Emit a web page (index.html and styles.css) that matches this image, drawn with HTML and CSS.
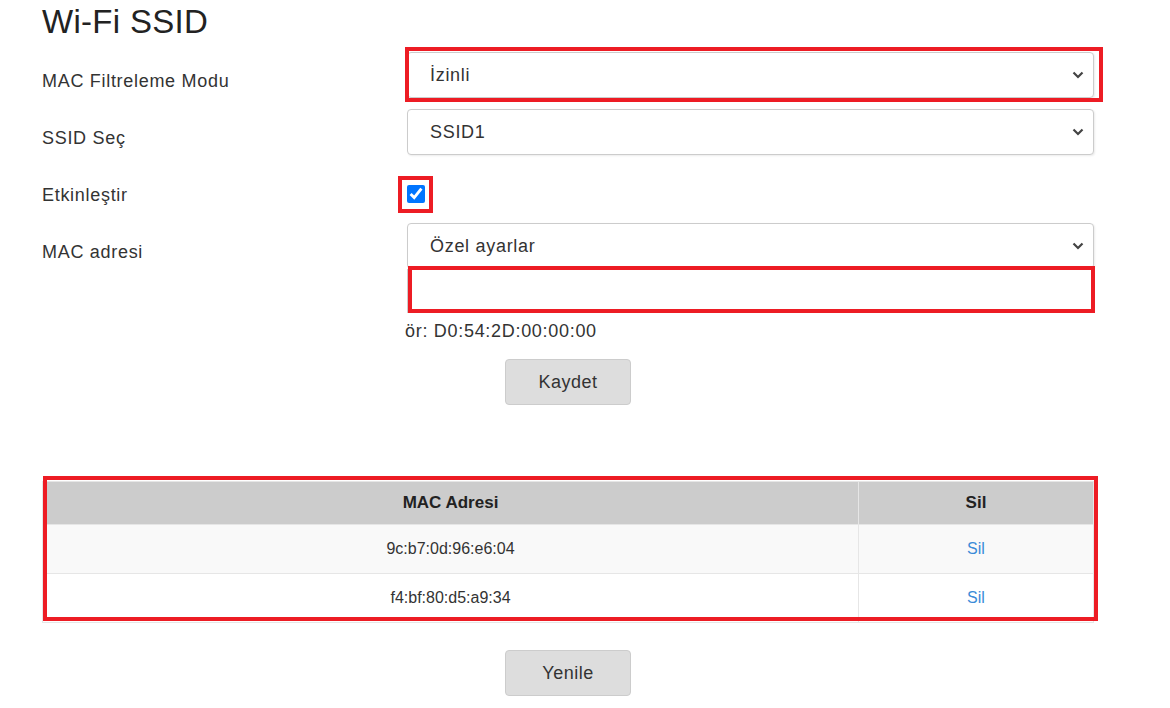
FILE: index.html
```html
<!DOCTYPE html>
<html lang="tr">
<head>
    <meta charset="UTF-8">
    <meta name="viewport" content="width=device-width, initial-scale=1.0">
    <title>Wi-Fi SSID</title>
    <link rel="stylesheet" href="styles.css">
</head>
<body>
    <div class="page">
        <h1 class="title">Wi-Fi SSID</h1>
        <form class="filter-form">
            <div class="row">
                <label class="row-label" for="mode">MAC Filtreleme Modu</label>
                <div class="row-field marked mark-mode">
                    <select id="mode" class="field-select">
                        <option>İzinli</option>
                        <option>Engelli</option>
                    </select>
                </div>
            </div>
            <div class="row">
                <label class="row-label" for="ssid">SSID Seç</label>
                <div class="row-field">
                    <select id="ssid" class="field-select">
                        <option>SSID1</option>
                        <option>SSID2</option>
                    </select>
                </div>
            </div>
            <div class="row">
                <label class="row-label" for="enable">Etkinleştir</label>
                <div class="row-field">
                    <span class="marked mark-check">
                        <input type="checkbox" id="enable" class="field-check" checked>
                    </span>
                </div>
            </div>
            <div class="row">
                <label class="row-label" for="mac-preset">MAC adresi</label>
                <div class="row-field">
                    <select id="mac-preset" class="field-select">
                        <option>Özel ayarlar</option>
                    </select>
                    <div class="marked mark-input">
                        <input type="text" id="mac" class="field-text">
                    </div>
                    <p class="hint">ör: D0:54:2D:00:00:00</p>
                </div>
            </div>
            <div class="actions">
                <button type="button" class="btn">Kaydet</button>
            </div>
        </form>

        <div class="marked mark-table table-wrap">
            <table class="mac-table">
                <thead>
                    <tr>
                        <th class="col-mac">MAC Adresi</th>
                        <th class="col-del">Sil</th>
                    </tr>
                </thead>
                <tbody>
                    <tr>
                        <td>9c:b7:0d:96:e6:04</td>
                        <td><a href="#" class="del-link">Sil</a></td>
                    </tr>
                    <tr>
                        <td>f4:bf:80:d5:a9:34</td>
                        <td><a href="#" class="del-link">Sil</a></td>
                    </tr>
                </tbody>
            </table>
        </div>

        <div class="actions actions-refresh">
            <button type="button" class="btn">Yenile</button>
        </div>
    </div>
</body>
</html>
```

FILE: styles.css
```css
body {
    margin: 0;
    padding: 0;
    background: #fff;
    color: #333;
    font-family: "Liberation Sans", Arial, sans-serif;
}
.page {
    width: 1052px;
    margin-left: 42px;
}
.title {
    margin: 3px 0 0;
    font-size: 33px;
    font-weight: normal;
    line-height: 38px;
    letter-spacing: 0.3px;
    color: #222;
}
.filter-form {
    margin-top: 11px;
    display: flex;
    flex-direction: column;
    gap: 11px;
}
.row {
    display: grid;
    grid-template-columns: 365px 1fr;
}
.row-label {
    padding-top: 19px;
    font-size: 18px;
    line-height: 21px;
    letter-spacing: 0.7px;
    color: #333;
}
.row-field {
    min-height: 46px;
}
.field-select {
    display: block;
    width: 100%;
    height: 46px;
    box-sizing: border-box;
    padding: 0 30px 0 22px;
    border: 1px solid #ccc;
    border-radius: 4px;
    -webkit-appearance: none;
    appearance: none;
    background: #fff url("data:image/svg+xml,%3Csvg xmlns='http://www.w3.org/2000/svg' width='12' height='8' viewBox='0 0 12 8'%3E%3Cpath d='M1.5 1.5 6 6 10.5 1.5' fill='none' stroke='%23444' stroke-width='2.2'/%3E%3C/svg%3E") no-repeat right 9px center;
    font-family: inherit;
    font-size: 18px;
    letter-spacing: 0.7px;
    color: #333;
    box-shadow: 1px 1px 2px rgba(0, 0, 0, 0.08);
}
.field-check {
    display: block;
    width: 18px;
    height: 18px;
    margin: 19px 0 0;
}
.field-text {
    display: block;
    width: 100%;
    height: 44px;
    box-sizing: border-box;
    border: 1px solid #ccc;
    font-size: 18px;
}
.hint {
    margin: 8px 0 0 -2px;
    font-size: 18px;
    line-height: 21px;
    letter-spacing: 0.7px;
    color: #333;
}
.actions {
    display: flex;
    justify-content: center;
    margin-top: 6px;
}
.btn {
    width: 126px;
    height: 46px;
    border: 1px solid #ccc;
    border-radius: 4px;
    background: #ddd;
    font-family: inherit;
    font-size: 18px;
    letter-spacing: 0.5px;
    color: #333;
    cursor: pointer;
}
.btn:hover {
    background: #d2d2d2;
}

/* red annotation boxes */
.marked {
    position: relative;
    display: block;
}
.marked::after {
    content: "";
    position: absolute;
    border: 4px solid #ed1c24;
    pointer-events: none;
}
.mark-mode::after {
    top: -5px;
    left: -2px;
    right: -9px;
    bottom: -4px;
}
.mark-check {
    display: inline-block;
}
.mark-check::after {
    top: 10px;
    left: -9px;
    right: -8px;
    bottom: -10px;
}
.mark-input::after {
    top: -3px;
    left: 1px;
    right: -1px;
    bottom: 0;
}
.mark-table::after {
    top: -5px;
    left: 1px;
    right: -4px;
    bottom: 2px;
}

.table-wrap {
    margin-top: 76px;
}
.mac-table {
    width: 100%;
    border-collapse: collapse;
    border: 1px solid #ddd;
    font-size: 16px;
    color: #333;
}
.mac-table th,
.mac-table td {
    border: 1px solid #e6e6e6;
    text-align: center;
    padding: 0;
}
.mac-table th {
    height: 42px;
    background: #ccc;
    font-size: 17px;
    font-weight: bold;
    color: #222;
}
.mac-table td {
    height: 48px;
}
.mac-table tbody tr:nth-child(odd) {
    background: #f9f9f9;
}
.col-mac {
    width: 815px;
}
.del-link {
    color: #3b8bd8;
    text-decoration: none;
}
.del-link:hover {
    text-decoration: underline;
}
.actions-refresh {
    margin-top: 27px;
}
```
